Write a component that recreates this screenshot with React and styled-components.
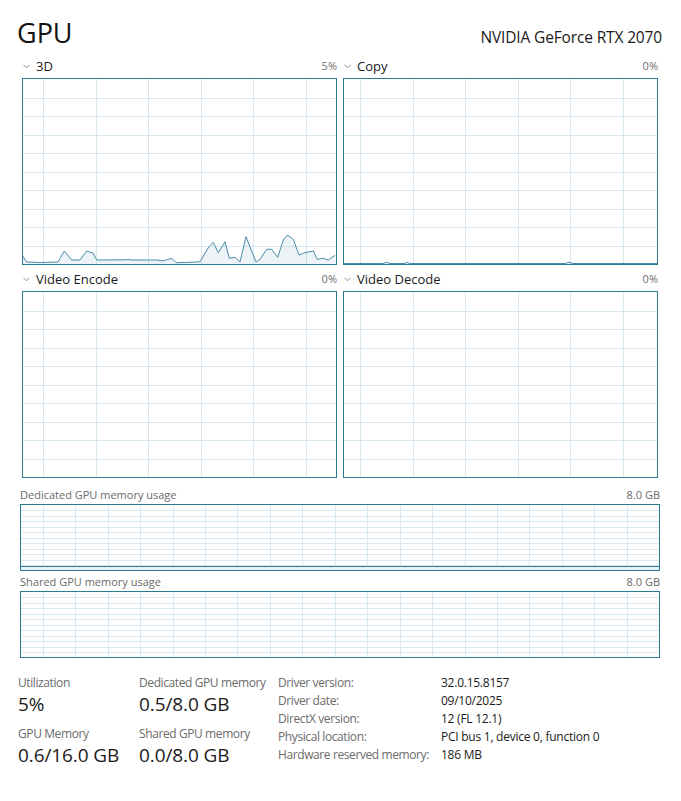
import React from 'react';
import styled, { createGlobalStyle } from 'styled-components';

const GlobalStyle = createGlobalStyle`
  html, body { margin: 0; padding: 0; background: #ffffff; }
  body { font-family: "Open Sans", "Noto Sans", sans-serif; color: #1b1b1b; }
`;

const BORDER = '#2f7a93';
const LINE = '#4a8dab';
const GRID = '#d7e8ef';
const FILL = 'rgba(74,141,171,0.10)';

const Page = styled.div`
  width: 681px;
  height: 801px;
  box-sizing: border-box;
  background: #fff;
  overflow: hidden;
`;

const Header = styled.header`
  height: 52px;
  display: flex;
  justify-content: space-between;
  align-items: flex-start;
  padding: 0 19px 0 17px;
  box-sizing: border-box;
`;

const Title = styled.h1`
  margin: 0;
  padding-top: 15px;
  font-weight: 400;
  font-size: 27px;
  line-height: 36px;
  color: #111;
`;

const Adapter = styled.div`
  padding-top: 27px;
  font-size: 15.5px;
  letter-spacing: -0.15px;
  line-height: 20px;
  color: #1b1b1b;
`;

const EngineGrid = styled.div`
  display: grid;
  grid-template-columns: 315px 315px;
  column-gap: 6px;
  padding-left: 22px;
`;

const Engine = styled.section`
  display: flex;
  flex-direction: column;
`;

const EngineHead = styled.div`
  height: 26px;
  box-sizing: border-box;
  padding-top: 6px;
  display: flex;
  align-items: flex-start;
  line-height: 16px;
`;

const Chevron = styled.svg`
  width: 7px;
  height: 5px;
  margin: 6px 6px 0 1px;
  flex: none;
`;

const EngineName = styled.span`
  font-size: 13px;
  color: #1b1b1b;
  flex: 1;
`;

const Percent = styled.span`
  font-size: 11px;
  color: #6f6f6f;
`;

const GraphFrame = styled.div`
  width: ${p => p.$w}px;
  height: ${p => p.$h}px;
  box-sizing: border-box;
  border: 1px solid ${BORDER};
  background: #fff;
  svg { display: block; }
`;

const MemorySection = styled.section`
  padding-left: 20px;
  margin-top: ${p => p.$first ? 6 : 0}px;
`;

const MemoryHead = styled.div`
  width: 640px;
  height: 20px;
  box-sizing: border-box;
  padding-top: 4px;
  display: flex;
  justify-content: space-between;
  font-size: 11px;
  line-height: 14px;
  color: #6a6a6a;
`;

const Stats = styled.div`
  margin-top: 16px;
  padding-left: 18px;
  display: grid;
  grid-template-columns: 121px 139px auto;
  align-items: start;
`;

const StatColumn = styled.div`
  display: flex;
  flex-direction: column;
`;

const StatLabel = styled.div`
  font-size: 12px;
  letter-spacing: -0.4px;
  line-height: 18px;
  color: #6b6b6b;
  white-space: nowrap;
`;

const StatValue = styled.div`
  font-size: 19px;
  letter-spacing: -0.1px;
  line-height: 25px;
  color: #1b1b1b;
  margin-bottom: 8px;
  white-space: nowrap;
`;

const Details = styled.dl`
  margin: 0;
  display: grid;
  grid-template-columns: 163px auto;
  grid-auto-rows: 18px;
  align-content: start;
  font-size: 12px;
  letter-spacing: -0.4px;
  line-height: 18px;
`;

const DetailKey = styled.dt`
  color: #6b6b6b;
  white-space: nowrap;
`;

const DetailVal = styled.dd`
  margin: 0;
  color: #1b1b1b;
  letter-spacing: -0.25px;
  white-space: nowrap;
`;

function GridLines({ iw, ih, colStep, colOffset, rowStep }) {
  const xs = [];
  for (let x = colOffset; x < iw - 0.5; x += colStep) xs.push(Math.round(x) + 0.5);
  const ys = [];
  for (let y = rowStep; y < ih - 1; y += rowStep) ys.push(Math.round(y) + 0.5);
  return (
    <g stroke={GRID} strokeWidth="1" shapeRendering="crispEdges">
      {xs.map(x => <line key={'x' + x} x1={x} y1={0} x2={x} y2={ih} />)}
      {ys.map(y => <line key={'y' + y} x1={0} y1={y} x2={iw} y2={y} />)}
    </g>
  );
}

function Graph({ w, h, colStep, colOffset, rowStep, points }) {
  const iw = w - 2;
  const ih = h - 2;
  let line = null;
  if (points) {
    const pts = points.map(([x, y]) => `${x},${y}`).join(' ');
    const area = `0,${ih} ${pts} ${iw},${ih}`;
    line = (
      <g>
        <polygon points={area} fill={FILL} />
        <polyline points={pts} fill="none" stroke={LINE} strokeWidth="1" strokeLinejoin="round" />
      </g>
    );
  }
  return (
    <GraphFrame $w={w} $h={h}>
      <svg width={iw} height={ih} viewBox={`0 0 ${iw} ${ih}`}>
        <GridLines iw={iw} ih={ih} colStep={colStep} colOffset={colOffset} rowStep={rowStep} />
        {line}
      </svg>
    </GraphFrame>
  );
}

function MemoryGraph({ usage }) {
  const iw = 638;
  const ih = 65;
  const top = ih - usage;
  return (
    <GraphFrame $w={640} $h={67}>
      <svg width={iw} height={ih} viewBox={`0 0 ${iw} ${ih}`}>
        <GridLines iw={iw} ih={ih} colStep={32.45} colOffset={21.7} rowStep={5.45} />
        {usage > 0 && (
          <g shapeRendering="crispEdges">
            <rect x={0} y={top} width={iw} height={usage} fill="#e6f1f5" />
            <line x1={0} y1={top + 0.5} x2={iw} y2={top + 0.5} stroke={BORDER} strokeWidth="1" />
          </g>
        )}
      </svg>
    </GraphFrame>
  );
}

// absolute points (page coords) for the 3D graph; converted to inner coords
const abs3d = [
  [22.7, 256], [26.7, 262], [40, 262.5], [58, 262], [64.3, 251], [71.7, 260], [80, 260], [86.7, 251],
  [93, 253], [96.7, 260], [126.7, 259.8], [128, 259.3], [131, 260], [156.7, 260], [163, 261], [171.7, 258.3],
  [176, 262.7], [190, 262.3], [200, 261.7], [209, 246.7], [213.3, 242.3], [218.3, 252.7], [225, 241.7],
  [229.3, 258.3], [235, 257.3], [240, 262], [246, 236.7], [256, 262], [260, 259.3], [266.7, 249.3],
  [271.7, 249.3], [277.7, 257.3], [283.3, 240], [287.3, 235], [293.3, 239.3], [299, 255], [305, 252.7],
  [313.3, 251], [317.3, 259.3], [322.7, 258.3], [328.3, 260], [335, 255.3],
];
const pts3d = abs3d.map(([x, y]) => [+(x - 23).toFixed(1), +(y - 79).toFixed(1)]);

const absCopy = [
  [344, 263.5], [383, 263.5], [386.5, 262.3], [390, 263.5], [404, 263.5], [407, 262.5], [410, 263.5],
  [565, 263.5], [569, 262.3], [573, 263.5], [658, 263.5],
];
const ptsCopy = absCopy.map(([x, y]) => [+(x - 344).toFixed(1), +(y - 79).toFixed(1)]);

const engines = [
  { name: '3D', pct: '5%', offset: 20, points: pts3d },
  { name: 'Copy', pct: '0%', offset: 16, points: ptsCopy },
  { name: 'Video Encode', pct: '0%', offset: 20, points: null },
  { name: 'Video Decode', pct: '0%', offset: 16, points: null },
];

const details = [
  ['Driver version:', '32.0.15.8157'],
  ['Driver date:', '09/10/2025'],
  ['DirectX version:', '12 (FL 12.1)'],
  ['Physical location:', 'PCI bus 1, device 0, function 0'],
  ['Hardware reserved memory:', '186 MB'],
];

export default function App() {
  return (
    <Page>
      <GlobalStyle />
      <Header>
        <Title>GPU</Title>
        <Adapter>NVIDIA GeForce RTX 2070</Adapter>
      </Header>
      <EngineGrid>
        {engines.map(e => (
          <Engine key={e.name}>
            <EngineHead>
              <Chevron viewBox="0 0 7 5">
                <polyline points="0.5,0.8 3.5,3.8 6.5,0.8" fill="none" stroke="#8a8a8a" strokeWidth="1" />
              </Chevron>
              <EngineName>{e.name}</EngineName>
              <Percent>{e.pct}</Percent>
            </EngineHead>
            <Graph w={315} h={187} colStep={52.5} colOffset={e.offset} rowStep={18.5} points={e.points} />
          </Engine>
        ))}
      </EngineGrid>
      <MemorySection $first>
        <MemoryHead>
          <span>Dedicated GPU memory usage</span>
          <span>8.0 GB</span>
        </MemoryHead>
        <MemoryGraph usage={4} />
      </MemorySection>
      <MemorySection>
        <MemoryHead>
          <span>Shared GPU memory usage</span>
          <span>8.0 GB</span>
        </MemoryHead>
        <MemoryGraph usage={0} />
      </MemorySection>
      <Stats>
        <StatColumn>
          <StatLabel>Utilization</StatLabel>
          <StatValue>5%</StatValue>
          <StatLabel>GPU Memory</StatLabel>
          <StatValue>0.6/16.0 GB</StatValue>
        </StatColumn>
        <StatColumn>
          <StatLabel>Dedicated GPU memory</StatLabel>
          <StatValue>0.5/8.0 GB</StatValue>
          <StatLabel>Shared GPU memory</StatLabel>
          <StatValue>0.0/8.0 GB</StatValue>
        </StatColumn>
        <Details>
          {details.map(([k, v]) => (
            <React.Fragment key={k}>
              <DetailKey>{k}</DetailKey>
              <DetailVal>{v}</DetailVal>
            </React.Fragment>
          ))}
        </Details>
      </Stats>
    </Page>
  );
}
